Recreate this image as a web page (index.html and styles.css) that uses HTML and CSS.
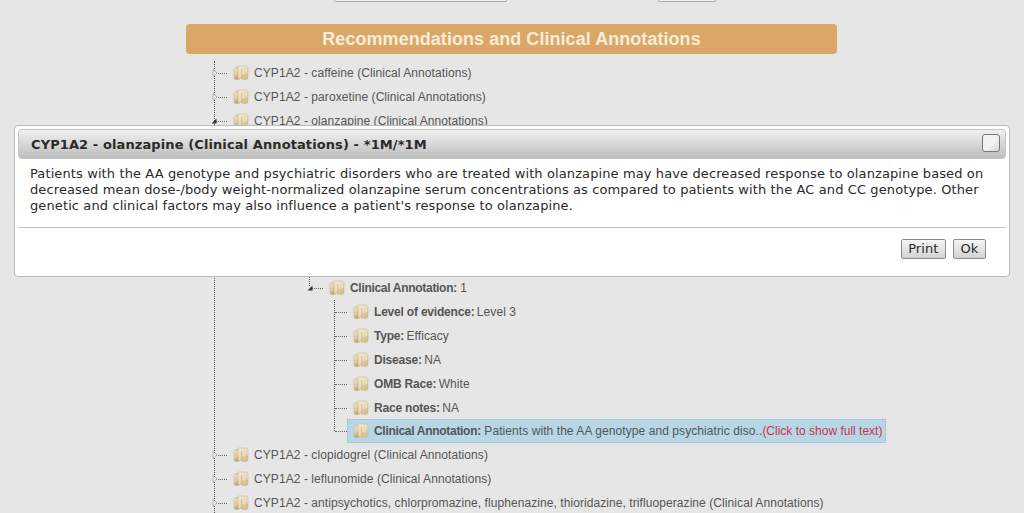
FILE: index.html
```html
<!DOCTYPE html>
<html lang="en">
<head>
<meta charset="utf-8">
<title>Recommendations and Clinical Annotations</title>
<link rel="stylesheet" href="styles.css">
</head>
<body>
<svg class="defs" width="0" height="0" aria-hidden="true">
  <defs>
    <linearGradient id="fa" x1="0" y1="0" x2=".4" y2="1">
      <stop offset="0" stop-color="#ece2c8"/>
      <stop offset=".6" stop-color="#e0cfa6"/>
      <stop offset="1" stop-color="#bfa06a"/>
    </linearGradient>
    <linearGradient id="fb" x1="0" y1="0" x2=".5" y2="1">
      <stop offset="0" stop-color="#f2ebd8"/>
      <stop offset=".7" stop-color="#e6d8b6"/>
      <stop offset="1" stop-color="#cbb07c"/>
    </linearGradient>
    <symbol id="folder" viewBox="0 0 16 16">
      <path d="M1 5.500Q1 3.500 3 3.500H6V15.500H2.500Q1 15.500 1 14Z" fill="url(#fa)" stroke="#cdb588" stroke-width=".6"/>
      <path d="M5 2H13Q15 2 15 4V13.500Q15 15.500 13 15.500H9.500L8.500 14.500H5Z" fill="url(#fb)" stroke="#cfba92" stroke-width=".6"/>
      <path d="M8.500 5V14" stroke="#cdb588" stroke-width=".7"/>
      <path d="M9 10.500H14.500V15H10L9 14Z" fill="#d8c394"/>
    </symbol>
    <symbol id="closed" viewBox="0 0 6 8">
      <path d="M1 .5 5 4 1 7.500Z" fill="#eeeeee" stroke="#a8a8a8" stroke-width=".8"/>
    </symbol>
    <symbol id="open" viewBox="0 0 6 6">
      <path d="M5.500 .5V5.500H.5Z" fill="#333333"/>
    </symbol>
  </defs>
</svg>

<div class="filters">
  <span class="stub stub-a"></span>
  <span class="stub stub-b"></span>
</div>

<main class="panel">
  <h1 class="banner">Recommendations and Clinical Annotations</h1>

  <ul class="tree">
    <li class="row"><svg class="toggle"><use href="#closed"/></svg><span class="twig"></span><span class="node"><svg class="folder"><use href="#folder"/></svg>CYP1A2 - caffeine (Clinical Annotations)</span></li>
    <li class="row"><svg class="toggle"><use href="#closed"/></svg><span class="twig"></span><span class="node"><svg class="folder"><use href="#folder"/></svg>CYP1A2 - paroxetine (Clinical Annotations)</span></li>
    <li class="row"><svg class="toggle toggle-open"><use href="#open"/></svg><span class="twig"></span><span class="node"><svg class="folder"><use href="#folder"/></svg>CYP1A2 - olanzapine (Clinical Annotations)</span></li>
    <li class="covered"></li>
    <li class="branch">
      <div class="row">
        <span class="stem"></span>
        <svg class="toggle toggle-open"><use href="#open"/></svg><span class="twig"></span><span class="node"><svg class="folder"><use href="#folder"/></svg><b class="tight">Clinical Annotation:</b>&nbsp;1</span>
      </div>
      <ul class="leaves">
        <li class="row"><span class="twig"></span><span class="node"><svg class="folder"><use href="#folder"/></svg><b>Level of evidence:</b>&nbsp;Level 3</span></li>
        <li class="row"><span class="twig"></span><span class="node"><svg class="folder"><use href="#folder"/></svg><b>Type:</b>&nbsp;Efficacy</span></li>
        <li class="row"><span class="twig"></span><span class="node"><svg class="folder"><use href="#folder"/></svg><b>Disease:</b>&nbsp;NA</span></li>
        <li class="row"><span class="twig"></span><span class="node"><svg class="folder"><use href="#folder"/></svg><b>OMB Race:</b>&nbsp;White</span></li>
        <li class="row"><span class="twig"></span><span class="node"><svg class="folder"><use href="#folder"/></svg><b>Race notes:</b>&nbsp;NA</span></li>
        <li class="row"><span class="twig"></span><span class="node node-selected"><svg class="folder"><use href="#folder"/></svg><b class="tight">Clinical Annotation:</b>&nbsp;Patients with the AA genotype and psychiatric diso..<span class="more">(Click to show full text)</span></span></li>
      </ul>
    </li>
    <li class="row"><svg class="toggle"><use href="#closed"/></svg><span class="twig"></span><span class="node"><svg class="folder"><use href="#folder"/></svg>CYP1A2 - clopidogrel (Clinical Annotations)</span></li>
    <li class="row"><svg class="toggle"><use href="#closed"/></svg><span class="twig"></span><span class="node"><svg class="folder"><use href="#folder"/></svg>CYP1A2 - leflunomide (Clinical Annotations)</span></li>
    <li class="row"><svg class="toggle"><use href="#closed"/></svg><span class="twig"></span><span class="node"><svg class="folder"><use href="#folder"/></svg>CYP1A2 - antipsychotics, chlorpromazine, fluphenazine, thioridazine, trifluoperazine (Clinical Annotations)</span></li>
  </ul>
</main>

<section class="dialog" role="dialog">
  <header class="dialog-title">
    <span>CYP1A2 - olanzapine (Clinical Annotations) - *1M/*1M</span>
    <button class="dialog-close" aria-label="Close"></button>
  </header>
  <p class="dialog-body">Patients with the AA genotype and psychiatric disorders who are treated with olanzapine may have decreased response to olanzapine based on decreased mean dose-/body weight-normalized olanzapine serum concentrations as compared to patients with the AC and CC genotype. Other genetic and clinical factors may also influence a patient's response to olanzapine.</p>
  <footer class="dialog-actions">
    <button class="btn">Print</button>
    <button class="btn">Ok</button>
  </footer>
</section>
</body>
</html>
```

FILE: styles.css
```css
* { box-sizing: border-box; }

html, body {
  height: 100%;
  margin: 0;
  overflow: hidden;
}

body {
  background: #e6e6e6;
  color: #555555;
  font-family: "Liberation Sans", Arial, sans-serif;
  font-size: 12px;
  letter-spacing: .075px;
}

.defs { position: absolute; }

.filters {
  display: flex;
  height: 2px;
  padding-left: 334px;
  gap: 151px;
}

.stub {
  height: 2px;
  background: #f0f0f0;
  border: 1px solid #a9a9a9;
  border-top: 0;
  border-radius: 0 0 3px 3px;
}
.stub-a { width: 173px; }
.stub-b { width: 58px; }

.panel {
  width: 651px;
  margin: 22px 0 0 186px;
}

.banner {
  height: 30px;
  margin: 0 0 7px;
  background: #dba766;
  border-radius: 4px;
  color: #f6ecdc;
  font-size: 18px;
  font-weight: bold;
  letter-spacing: .05px;
  line-height: 30px;
  text-align: center;
}

.tree {
  position: relative;
  margin: 0 0 0 28px;
  padding: 0;
  list-style: none;
  width: 800px;
  border-left: 1px dotted #555555;
}

.tree ul { list-style: none; margin: 0; padding: 0; }

.row {
  position: relative;
  display: flex;
  align-items: center;
  height: 24px;
  white-space: nowrap;
}

.twig {
  flex: none;
  width: 12px;
  height: 0;
  border-top: 1px dotted #666666;
}

.toggle {
  position: absolute;
  left: -3px;
  top: 8px;
  width: 6px;
  height: 8px;
}
.toggle-open {
  left: -4px;
  top: 9px;
  width: 6px;
  height: 6px;
}

.node {
  display: flex;
  align-items: center;
  height: 24px;
  padding: 0 3px 0 6px;
  border: 1px solid transparent;
  border-left: 0;
}

.node-selected {
  background: #b7d6e6;
  border-color: #a3c8da;
  border-left: 1px solid #a3c8da;
  padding-left: 5px;
}

.folder {
  flex: none;
  width: 16px;
  height: 16px;
  margin: -2px 5px 0 0;
}

.node b {
  color: #555555;
  letter-spacing: -.2px;
  margin-right: -1px;
}
.node b.tight {
  letter-spacing: -.3px;
  margin-right: 0;
}
.more { color: #cc3344; letter-spacing: 0; }

.covered { height: 143px; }

.branch { margin-left: 96px; }

.stem {
  position: absolute;
  left: -2px;
  top: 0;
  height: 10px;
  border-left: 1px dotted #555555;
}

.leaves {
  position: relative;
  margin-left: 24px !important;
}

.leaves .row:last-child { margin-top: -1px; }

.leaves::before {
  content: "";
  position: absolute;
  left: -1px;
  top: 0;
  bottom: 12px;
  border-left: 1px dotted #555555;
}

.dialog {
  position: absolute;
  left: 14px;
  top: 125px;
  width: 996px;
  height: 152px;
  padding: 3px 3px 0;
  background: #ffffff;
  border: 1px solid #bcbcbc;
  border-radius: 4px;
  font-family: "DejaVu Sans", Verdana, sans-serif;
  color: #2a2a2a;
}

.dialog-title {
  display: flex;
  align-items: center;
  justify-content: space-between;
  height: 30px;
  padding: 0 5px 0 12px;
  background: linear-gradient(#f1f1f1, #bdbdbd);
  border: 1px solid #c4c4c4;
  border-radius: 4px;
  font-size: 13px;
  font-weight: bold;
  letter-spacing: .1px;
}

.dialog-close {
  width: 18px;
  height: 18px;
  margin-bottom: 2px;
  padding: 0;
  background: linear-gradient(135deg, #f2f2f2 55%, #d6d6d6);
  border: 1px solid #777777;
  border-radius: 3px;
}

.dialog-body {
  height: 69px;
  margin: 0;
  padding: 7px 12px 0;
  border-bottom: 1px solid #bdbdbd;
  font-size: 13px;
  letter-spacing: .11px;
  line-height: 16px;
}

.dialog-actions {
  display: flex;
  justify-content: flex-end;
  gap: 7px;
  padding: 11px 20px 0 0;
}

.btn {
  height: 20px;
  padding: 0 6.5px;
  background: linear-gradient(#f6f6f6, #d2d2d2);
  border: 1px solid #8c8c8c;
  border-radius: 2px;
  color: #2a2a2a;
  font-family: inherit;
  font-size: 13px;
  letter-spacing: .1px;
  line-height: 18px;
}
```
